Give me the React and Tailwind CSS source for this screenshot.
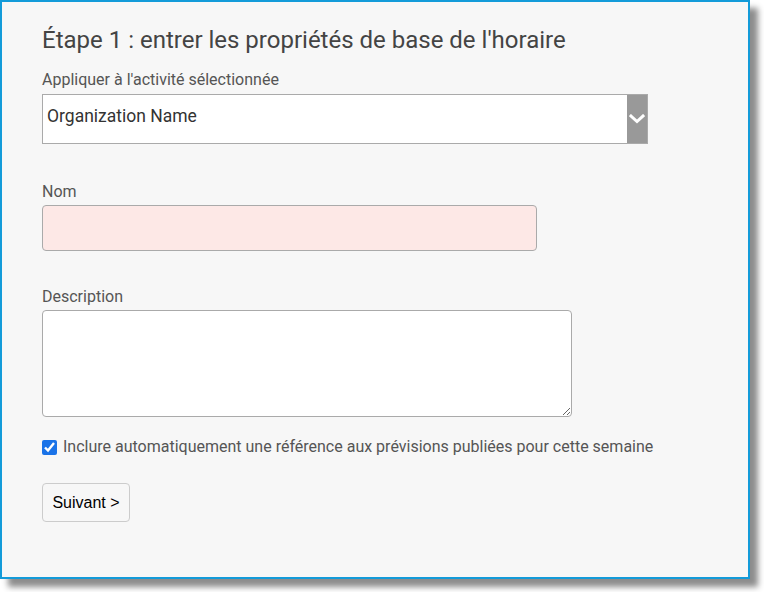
import React from "react";

const Chevron = () => (
  <svg width="16" height="10" viewBox="0 0 16 10" fill="none">
    <path d="M2 2l6 5.5L14 2" stroke="white" strokeWidth="3" strokeLinecap="square" />
  </svg>
);

export default function App() {
  return (
    <div className="w-[764px] h-[592px] bg-white font-['Roboto',sans-serif]">
      <div className="w-[750px] h-[579px] border-2 border-[#139bd9] bg-[#f7f7f7] shadow-[8px_8px_6px_rgba(0,0,0,0.45)] pl-[40px] pt-[24px]">
        <h1 className="text-[24px] leading-[28px] text-[#444]">
          Étape 1 : entrer les propriétés de base de l'horaire
        </h1>

        <label className="block mt-[16px] text-[16px] leading-[20px] text-[#555]">
          Appliquer à l'activité sélectionnée
        </label>
        <div className="mt-[4px] flex w-[606px] h-[50px] border border-[#aaa] bg-white">
          <div className="flex-1 flex items-center pl-[4px] pb-[5px] text-[17.5px] text-[#333]">
            Organization Name
          </div>
          <div className="w-[20px] bg-[#999] flex items-center justify-center">
            <Chevron />
          </div>
        </div>

        <label className="block mt-[38px] text-[16px] leading-[20px] text-[#555]">Nom</label>
        <div className="mt-[3px] w-[495px] h-[46px] rounded-[4px] border border-[#aaa] bg-[#fde8e6]" />

        <label className="block mt-[36px] text-[16px] leading-[20px] text-[#555]">Description</label>
        <textarea className="block mt-[3px] w-[530px] h-[107px] rounded-[4px] border border-[#aaa] bg-white" />

        <label className="mt-[20px] flex items-center gap-[6px] text-[16px] leading-[20px] text-[#555]">
          <input type="checkbox" defaultChecked className="w-[15px] h-[15px] accent-[#1a73e8]" />
          Inclure automatiquement une référence aux prévisions publiées pour cette semaine
        </label>

        <button className="mt-[26px] w-[88px] h-[39px] rounded-[4px] border border-[#ccc] bg-[#f7f7f7] font-['Liberation_Sans',sans-serif] text-[16px] text-black">
          Suivant &gt;
        </button>
      </div>
    </div>
  );
}
